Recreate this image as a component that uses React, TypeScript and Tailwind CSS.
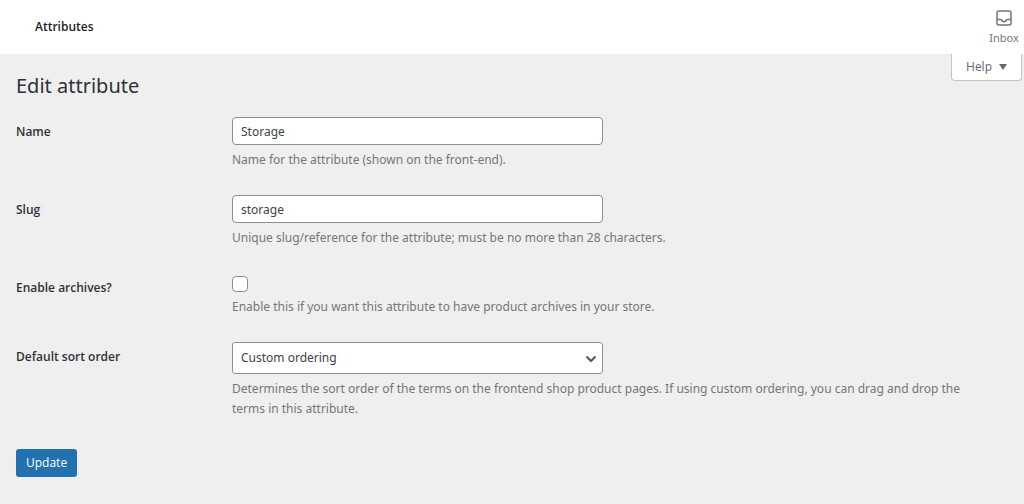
import type { ReactNode } from "react";

const inputClass =
  "block h-7 w-full max-w-[371px] rounded border border-[#8c8f94] bg-white px-2 text-[12px] text-[#3c434a]";

function Field({ id, label, help, children, className }: { id: string; label: string; help: string; children: ReactNode; className: string }) {
  return (
    <div className={`grid grid-cols-[216px_1fr] ${className}`}>
      <label htmlFor={id} className="pt-[5px] font-['Open_Sans','Noto_Sans',sans-serif] font-semibold leading-5 text-[#2c3338]">
        {label}
      </label>
      <div>
        {children}
        <p className="mt-[5px] leading-5 text-[#72777c]">{help}</p>
      </div>
    </div>
  );
}

export default function App() {
  return (
    <div className="min-h-screen bg-[#efefef] font-['Noto_Sans','Open_Sans',sans-serif] text-[12px] text-[#3c434a]">
      <header className="flex h-[54px] items-center justify-between bg-white pl-[35px]">
        <h2 className="font-['Open_Sans','Noto_Sans',sans-serif] text-[12px] font-semibold text-[#1e1e1e]">Attributes</h2>
        <button type="button" className="flex w-10 flex-col items-center gap-px pt-[3px] text-[11px] leading-5 text-[#757575]">
          <svg viewBox="0 0 18 18" className="size-[18px]" fill="none" stroke="currentColor" strokeWidth="1.5">
            <rect x="2" y="2" width="14" height="14" rx="1.5" />
            <path d="M2 10.5h3.5q1 0 1.5 1 .7 1.2 2 1.2t2-1.2q.5-1 1.500-1H16" />
          </svg>
          Inbox
        </button>
      </header>
      <main className="pl-4">
        <div className="flex items-start justify-between pr-0.5">
          <h1 className="pt-4 text-[20px] leading-8 text-[#2c3338]">Edit attribute</h1>
          <button type="button" className="flex h-[27px] items-center gap-[7px] rounded-b border border-t-0 border-[#c3c4c7] bg-white px-3.5 font-['Open_Sans','Noto_Sans',sans-serif] text-[12px] text-[#646970]">
            Help
            <svg viewBox="0 0 8 6" className="h-1.5 w-2" fill="currentColor"><path d="M0 0h8L4 6z" /></svg>
          </button>
        </div>
        <form className="pr-9" onSubmit={(e) => e.preventDefault()}>
          <Field id="name" label="Name" help="Name for the attribute (shown on the front-end)." className="mt-[15px]">
            <input id="name" defaultValue="Storage" className={inputClass} />
          </Field>
          <Field id="slug" label="Slug" help="Unique slug/reference for the attribute; must be no more than 28 characters." className="mt-[25px]">
            <input id="slug" defaultValue="storage" className={inputClass} />
          </Field>
          <Field id="archives" label="Enable archives?" help="Enable this if you want this attribute to have product archives in your store." className="mt-[25px]">
            <input id="archives" type="checkbox" className="mt-[3px] block size-4 appearance-none rounded border border-[#8c8f94] bg-white" />
          </Field>
          <Field id="order" label="Default sort order" help="Determines the sort order of the terms on the frontend shop product pages. If using custom ordering, you can drag and drop the terms in this attribute." className="mt-[25px]">
            <div className="grid w-full max-w-[371px] items-center">
              <select id="order" className="col-start-1 row-start-1 h-8 w-full appearance-none rounded-[3px] border border-[#8c8f94] bg-white px-2 text-[12px] text-[#3c434a]">
                <option>Custom ordering</option>
              </select>
              <svg viewBox="0 0 12 8" className="pointer-events-none col-start-1 row-start-1 mr-1.5 mt-0.5 h-2 w-3 justify-self-end" fill="none" stroke="#50575e" strokeWidth="2"><path d="m1.500 1.500 4.500 4.500 4.500-4.500" /></svg>
            </div>
          </Field>
          <button type="submit" className="mt-[30px] h-7 rounded-[3px] bg-[#2271b1] px-2.5 font-['Open_Sans','Noto_Sans',sans-serif] text-[12px] text-white">Update</button>
        </form>
      </main>
    </div>
  );
}
